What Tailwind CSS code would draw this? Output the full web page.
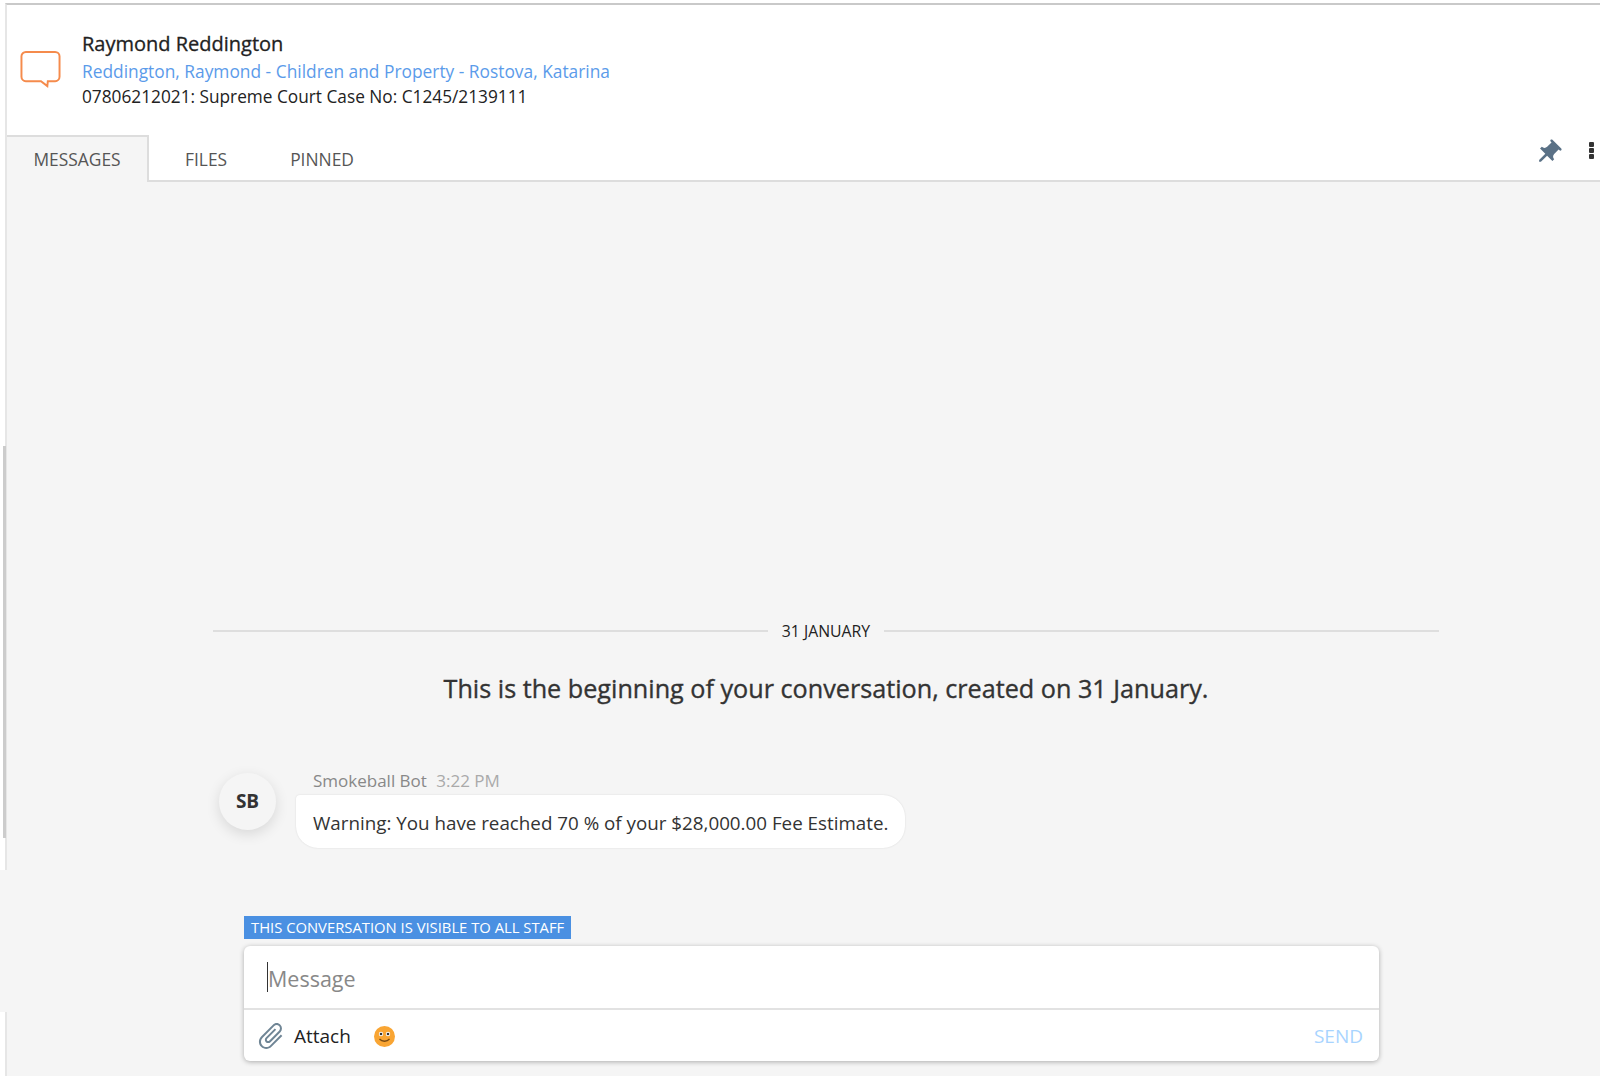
<!DOCTYPE html>
<html lang="en">
<head>
<meta charset="UTF-8">
<title>Raymond Reddington</title>
<script src="https://cdn.jsdelivr.net/npm/@tailwindcss/browser@4"></script>
</head>
<body class="bg-white font-['Open_Sans',sans-serif]">
<div class="relative w-[1600px] h-[1076px] overflow-hidden pt-[3px]">
  <div class="h-full flex flex-col ml-[5px] border-t-2 border-l-2 border-t-[#c9c9c9] border-l-[#e6e6e6]">

    <!-- header -->
    <div class="h-[130px] flex items-start shrink-0">
      <svg class="ml-[13px] mt-[45px] w-[41px] h-[38px]" viewBox="0 0 42 38" fill="none">
        <path d="M6 1.500h30a4.500 4.500 0 0 1 4.500 4.500v21a4.500 4.500 0 0 1-4.500 4.500H28.500l-.5 5-6.500-5H6A4.500 4.500 0 0 1 1.500 27V6A4.500 4.500 0 0 1 6 1.500z" stroke="#f58b4c" stroke-width="2"/>
      </svg>
      <div class="ml-[21px] pt-[23px]">
        <div class="text-[20px] leading-[32px] [-webkit-text-stroke:0.3px] text-[#222]">Raymond Reddington</div>
        <div class="-mt-[1px] text-[17.35px] leading-[24px] text-[#5b9bea]">Reddington, Raymond - Children and Property - Rostova, Katarina</div>
        <div class="text-[17.25px] leading-[28px] text-[#222]">07806212021: Supreme Court Case No: C1245/2139111</div>
      </div>
    </div>

    <!-- tabs -->
    <div class="h-[47px] shrink-0 flex items-end border-b-2 border-[#dddddd] relative">
      <div class="w-[142px] h-[47px] -mb-[2px] bg-[#f5f5f5] border-t-2 border-r-2 border-[#dddddd] flex items-center justify-center text-[17.4px] text-[#555]">MESSAGES</div>
      <div class="h-[42px] flex items-center ml-[36px] text-[17.4px] text-[#555]">FILES</div>
      <div class="h-[42px] flex items-center ml-[63px] text-[17.4px] text-[#555]">PINNED</div>
      <svg class="absolute left-[1526px] top-[3px] w-[30px] h-[30px]" viewBox="0 0 24 24" fill="#5a7186">
        <path transform="rotate(45 12 12)" d="M16 9V4h1c.55 0 1-.45 1-1s-.45-1-1-1H7c-.55 0-1 .45-1 1s.45 1 1 1h1v5c0 1.660-1.340 3-3 3v2h5.970v7l1 1 1-1v-7H19v-2c-1.660 0-3-1.340-3-3z"/>
      </svg>
      <div class="absolute left-[1582px] top-[7px] flex flex-col gap-[1px]">
        <span class="w-[5px] h-[5px] rounded-[1px] bg-[#333]"></span>
        <span class="w-[5px] h-[5px] rounded-[1px] bg-[#333]"></span>
        <span class="w-[5px] h-[5px] rounded-[1px] bg-[#333]"></span>
      </div>
    </div>

    <!-- messages + composer -->
    <div class="flex-1 bg-[#f5f5f5] flex flex-col justify-end pb-[15px]">
      <div class="ml-[206px] w-[1226px] flex items-center gap-[14px]">
        <div class="flex-1 h-[2px] bg-[#dedede]"></div>
        <div class="text-[15.8px] leading-[24px] text-[#222]">31 JANUARY</div>
        <div class="flex-1 h-[2px] bg-[#dedede]"></div>
      </div>
      <div class="ml-[206px] w-[1226px] mt-[28px] text-center text-[25.2px] leading-[34px] [-webkit-text-stroke:0.35px] text-[#333]">This is the beginning of your conversation, created on 31 January.</div>

      <div class="ml-[212px] mt-[64px] flex items-start">
        <div class="mt-[4px] w-[57px] h-[57px] rounded-full bg-[#f5f5f5] shadow-[0_4px_14px_rgba(0,0,0,0.12)] flex items-center justify-center text-[19px] font-bold text-[#333]">SB</div>
        <div class="ml-[20px]">
          <div class="ml-[17px] text-[17px] leading-[24px] text-[#888]">Smokeball Bot <span class="ml-[5px] text-[#aaa]">3:22 PM</span></div>
          <div class="mt-[2px] h-[53px] px-[17px] pt-[3px] flex items-center bg-white rounded-[22px] rounded-tl-[4px] shadow-[0_0_2px_rgba(0,0,0,0.12)] text-[18.8px] text-[#333]">Warning: You have reached 70 % of your $28,000.00 Fee Estimate.</div>
        </div>
      </div>

      <div class="ml-[237px] mt-[68px] w-fit h-[23px] px-[7px] flex items-center bg-[#4a90e2] text-white text-[14.8px]">THIS CONVERSATION IS VISIBLE TO ALL STAFF</div>
      <div class="ml-[237px] mt-[7px] w-[1135px] h-[115px] bg-white rounded-[6px] shadow-[0_1px_5px_rgba(0,0,0,0.3)] flex flex-col">
        <div class="h-[64px] flex items-center pl-[23px] border-b-2 border-[#e2e2e2]">
          <span class="w-[1px] h-[30px] bg-[#333]"></span>
          <span class="mt-[4px] text-[21.5px] text-[#888]">Message</span>
        </div>
        <div class="flex-1 flex items-center pl-[11px] pr-[16px]">
          <svg class="w-[32px] h-[32px]" viewBox="0 0 24 24" fill="#6f8595">
            <path transform="rotate(45 12 12)" d="M16.500 6v11.500c0 2.210-1.790 4-4 4s-4-1.790-4-4V5c0-1.380 1.120-2.500 2.500-2.500s2.500 1.120 2.500 2.500v10.500c0 .55-.45 1-1 1s-1-.45-1-1V6H10v9.500c0 1.380 1.120 2.500 2.500 2.500s2.500-1.120 2.500-2.500V5c0-2.210-1.790-4-4-4S7 2.790 7 5v12.500c0 3.040 2.460 5.500 5.500 5.500s5.500-2.460 5.500-5.500V6h-1.500z"/>
          </svg>
          <span class="ml-[7px] mt-[2px] text-[19px] text-[#222]">Attach</span>
          <svg class="ml-[23px] mt-[1px] w-[21px] h-[21px]" viewBox="0 0 21 21">
            <circle cx="10.500" cy="10.500" r="10.500" fill="#f9a533"/>
            <circle cx="7" cy="8" r="2.200" fill="#fff"/>
            <circle cx="14" cy="8" r="2.200" fill="#fff"/>
            <circle cx="7" cy="8" r="1.300" fill="#333"/>
            <circle cx="14" cy="8" r="1.300" fill="#333"/>
            <path d="M5.500 13c2.500 3 7.500 3 10 0" stroke="#7a4a10" stroke-width="1.300" fill="none"/>
          </svg>
          <span class="ml-auto mt-[2px] text-[19px] text-[#a8d4ff]">SEND</span>
        </div>
      </div>
    </div>
  </div>

  <!-- window scrollbar and strip lying over the left edge -->
  <div class="absolute left-[3px] top-[446px] w-[3px] h-[392px] bg-[#cccccc]"></div>
  <div class="absolute left-0 top-[870px] w-[8px] h-[142px] bg-[#f5f5f5]"></div>
</div>
</body>
</html>
